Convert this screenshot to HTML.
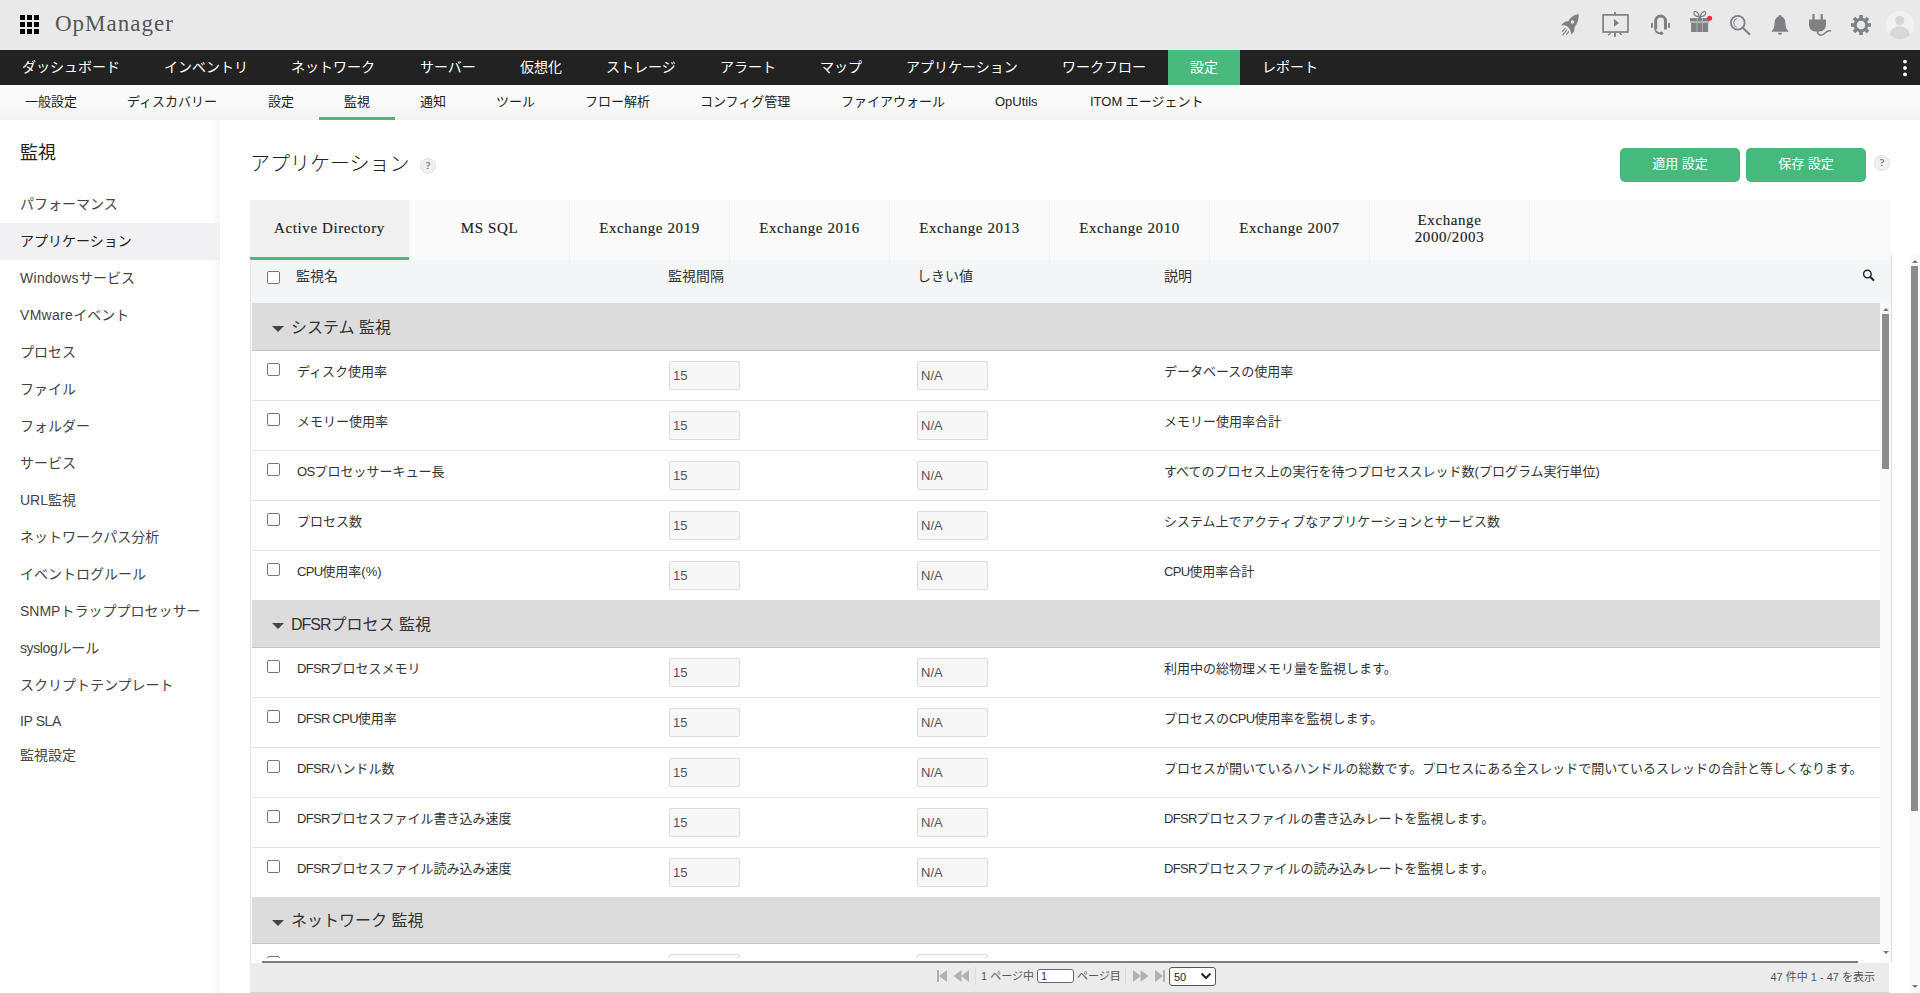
<!DOCTYPE html>
<html lang="ja">
<head>
<meta charset="utf-8">
<title>OpManager</title>
<style>
*{box-sizing:border-box;margin:0;padding:0}
html,body{width:1920px;height:993px;overflow:hidden;background:#fff}
body{position:relative;font-family:"Liberation Sans","Noto Sans CJK JP",sans-serif;font-size:13px;color:#333}
.abs{position:absolute}
#top{left:0;top:0;width:1920px;height:50px;background:#e9e9ea}
#logo{left:55px;top:9px;font-family:"Liberation Serif",serif;font-size:23px;line-height:30px;color:#555;white-space:nowrap;letter-spacing:1px}
#nav{left:0;top:50px;width:1920px;height:35px;background:#222}
#nav span{position:absolute;top:0;height:35px;line-height:35px;color:#fff;font-size:14px;white-space:nowrap}
#nav .on{background:#48ba7d}
#sub{left:0;top:85px;width:1920px;height:35px;background:linear-gradient(to bottom,#fafafa 0,#fafafa 50%,#f2f2f2 100%)}
#sub span{position:absolute;top:0;height:35px;line-height:33px;color:#222;font-size:13px;white-space:nowrap}
#side{left:0;top:120px;width:220px;height:873px;background:linear-gradient(to right,#fff 0,#fff 212px,#f5f5f5 220px)}
#side h3{position:absolute;left:20px;top:21px;font-size:18px;font-weight:normal;color:#222;line-height:24px}
#side a{position:absolute;left:0;width:220px;height:37px;line-height:36px;padding-left:20px;font-size:14px;color:#444;white-space:nowrap}
#side a.on{background:#f1f1f3;color:#222}
</style>
</head>
<body>
<div id="top" class="abs">
  <svg class="abs" style="left:20px;top:15px" width="19" height="19" viewBox="0 0 19 19"><g fill="#000"><rect x="0" y="0" width="5" height="5"/><rect x="7" y="0" width="5" height="5"/><rect x="14" y="0" width="5" height="5"/><rect x="0" y="7" width="5" height="5"/><rect x="7" y="7" width="5" height="5"/><rect x="14" y="7" width="5" height="5"/><rect x="0" y="14" width="5" height="5"/><rect x="7" y="14" width="5" height="5"/><rect x="14" y="14" width="5" height="5"/></g></svg>
  <div id="logo" class="abs">OpManager</div>
  <svg class="abs" style="left:1540px;top:0" width="380" height="50" viewBox="1540 0 380 50">
    <g fill="#7e8083" stroke="none">
      <!-- rocket -->
      <path d="M1578.7 14 C1574.5 14.6 1571.2 16.6 1569.2 19.8 L1568.3 21.2 C1565.6 21 1562.8 22.6 1561 25.6 C1563.4 24.8 1566 25.4 1568 27 C1569.8 28.6 1570.8 30.6 1571.2 34.2 C1573.6 33 1575 30.6 1574.4 27.6 C1577.4 23.6 1579 19 1578.7 14 Z"/>
      <circle cx="1572.4" cy="22" r="1.7" fill="#ededee"/>
      <path d="M1565.5 28 L1562 31.8 M1566.9 29.6 L1562.6 35.4 M1568.7 31.4 L1566.2 35" stroke="#7e8083" stroke-width="1.1" fill="none"/>
      <!-- presentation -->
      <rect x="1603.1" y="14.9" width="24.9" height="17.1" fill="none" stroke="#7e8083" stroke-width="1.7"/>
      <rect x="1614" y="12" width="1.9" height="3"/>
      <rect x="1614" y="32.6" width="1.9" height="4.3"/>
      <path d="M1610.6 32.8 L1608.2 35.4 M1619.4 32.8 L1621.6 35" stroke="#7e8083" stroke-width="1.3" fill="none"/>
      <path d="M1614 19 L1619 22.9 L1614 26.8 Z"/>
      <!-- headset -->
      <path d="M1655.7 29 L1655.7 21 A4.9 4.9 0 0 1 1665.5 21 L1665.5 29.4" fill="none" stroke="#7e8083" stroke-width="3"/>
      <path d="M1657.9 27.6 L1657.9 21.4 A2.7 3 0 0 1 1663.3 21.4 L1663.3 27.6 Z" fill="#e9e9ea" opacity=".55"/>
      <path d="M1655.2 28.6 C1655.4 32.2 1657.4 33.3 1661 33.3" fill="none" stroke="#7e8083" stroke-width="1.7"/>
      <circle cx="1661.4" cy="33.2" r="1.8"/>
      <rect x="1651" y="22.8" width="1.9" height="5.2" rx=".9"/><rect x="1668.1" y="22.8" width="1.9" height="5.2" rx=".9"/>
      <!-- gift -->
      <rect x="1690" y="18.1" width="19.4" height="3.5"/>
      <rect x="1691.1" y="23" width="17" height="9"/>
      <rect x="1690" y="21.6" width="19.4" height="1.4" fill="#b9babc"/>
      <rect x="1696.5" y="18.1" width="1.1" height="13.9" fill="#a9abad"/><rect x="1701.9" y="18.1" width="1.1" height="13.9" fill="#a9abad"/>
      <path d="M1699.3 16.6 C1696.4 16.8 1693.6 15 1693.9 12.8 C1694.3 10.4 1697.6 10.8 1699.3 16 M1700.3 16.6 C1703.2 16.8 1706 15 1705.7 12.8 C1705.3 10.4 1702 10.8 1700.3 16" fill="none" stroke="#7e8083" stroke-width="1.3"/>
      <rect x="1698.6" y="15.8" width="2.4" height="2.4"/>
      <circle cx="1709.6" cy="18.2" r="2.5" fill="#f7283a"/>
      <!-- search -->
      <circle cx="1737.8" cy="22.8" r="6.9" fill="none" stroke="#7e8083" stroke-width="1.8"/>
      <path d="M1737.4 18.4 A4.6 4.6 0 0 0 1736.6 27.2" fill="none" stroke="#7e8083" stroke-width="1"/>
      <path d="M1742.8 27.8 L1749.4 34.2" stroke="#7e8083" stroke-width="2.2" stroke-linecap="round" fill="none"/>
      <!-- bell -->
      <path d="M1780 15 C1781.2 15 1781.6 15.8 1781.6 16.4 C1784.4 17.4 1785.2 20 1785.4 23 C1785.6 27 1786.2 29 1788.2 30.8 L1788.2 31.8 L1771.8 31.8 L1771.8 30.8 C1773.8 29 1774.4 27 1774.6 23 C1774.8 20 1775.6 17.4 1778.4 16.4 C1778.4 15.8 1778.8 15 1780 15 Z"/>
      <path d="M1777.8 32.8 L1782.2 32.8 A2.2 2 0 0 1 1777.8 32.8 Z"/>
    </g>
    <g fill="#808080">
      <!-- plug -->
      <rect x="1812.4" y="14" width="2.2" height="6"/><rect x="1820.6" y="14" width="2.2" height="6"/>
      <path d="M1809 19.6 L1826 19.6 L1826 24.5 C1826 28.5 1823.4 31.2 1819.6 31.6 L1815.4 31.6 C1811.6 31.2 1809 28.5 1809 24.5 Z"/>
      <path d="M1817.4 31 C1817.4 35.6 1822 36.2 1824.4 33.6 C1826.4 31.4 1828.4 30.2 1831 31" fill="none" stroke="#808080" stroke-width="1.5"/>
    </g>
    <!-- gear -->
    <g transform="translate(1861 25)" fill="#7e8083">
      <circle r="5.8" fill="none" stroke="#7e8083" stroke-width="3"/>
      <g id="t"><rect x="-1.8" y="-10" width="3.6" height="3.6"/></g>
      <rect x="-1.8" y="-10" width="3.6" height="3.6" transform="rotate(45)"/>
      <rect x="-1.8" y="-10" width="3.6" height="3.6" transform="rotate(90)"/>
      <rect x="-1.8" y="-10" width="3.6" height="3.6" transform="rotate(135)"/>
      <rect x="-1.8" y="-10" width="3.6" height="3.6" transform="rotate(180)"/>
      <rect x="-1.8" y="-10" width="3.6" height="3.6" transform="rotate(225)"/>
      <rect x="-1.8" y="-10" width="3.6" height="3.6" transform="rotate(270)"/>
      <rect x="-1.8" y="-10" width="3.6" height="3.6" transform="rotate(315)"/>
    </g>
    <!-- avatar -->
    <clipPath id="av"><circle cx="1900" cy="25" r="14"/></clipPath>
    <circle cx="1900" cy="25" r="14" fill="#f1f1f1"/>
    <g clip-path="url(#av)" fill="#d7d7d7"><circle cx="1899.8" cy="20.6" r="4.7"/><ellipse cx="1899.8" cy="34.6" rx="10" ry="8.3"/></g>
  </svg>

</div>
<div id="nav" class="abs">
  <span style="left:22px">ダッシュボード</span>
  <span style="left:164px">インベントリ</span>
  <span style="left:291px">ネットワーク</span>
  <span style="left:420px">サーバー</span>
  <span style="left:520px">仮想化</span>
  <span style="left:606px">ストレージ</span>
  <span style="left:720px">アラート</span>
  <span style="left:820px">マップ</span>
  <span style="left:906px">アプリケーション</span>
  <span style="left:1062px">ワークフロー</span>
  <span class="on" style="left:1168px;width:72px;text-align:center">設定</span>
  <span style="left:1262px">レポート</span>
  <svg class="abs" style="left:1902px;top:9px" width="6" height="18" viewBox="0 0 6 18"><g fill="#fff"><circle cx="3" cy="2.6" r="1.9"/><circle cx="3" cy="9" r="1.9"/><circle cx="3" cy="15.4" r="1.9"/></g></svg>
</div>
<div id="sub" class="abs">
  <span style="left:25px">一般設定</span>
  <span style="left:127px">ディスカバリー</span>
  <span style="left:268px">設定</span>
  <span style="left:344px">監視</span>
  <span style="left:420px">通知</span>
  <span style="left:496px">ツール</span>
  <span style="left:585px">フロー解析</span>
  <span style="left:700px">コンフィグ管理</span>
  <span style="left:841px">ファイアウォール</span>
  <span style="left:995px">OpUtils</span>
  <span style="left:1090px">ITOM エージェント</span>
  <i class="abs" style="left:319px;top:32px;width:76px;height:3px;background:#48ba7d"></i>
</div>
<div id="side" class="abs">
  <h3>監視</h3>
  <a style="top:66px">パフォーマンス</a>
  <a class="on" style="top:103px">アプリケーション</a>
  <a style="top:140px"><span class="w">Windows</span>サービス</a>
  <a style="top:177px"><span class="w">VMware</span>イベント</a>
  <a style="top:214px">プロセス</a>
  <a style="top:251px">ファイル</a>
  <a style="top:288px">フォルダー</a>
  <a style="top:325px">サービス</a>
  <a style="top:362px">URL監視</a>
  <a style="top:399px">ネットワークパス分析</a>
  <a style="top:436px">イベントログルール</a>
  <a style="top:473px">SNMPトラッププロセッサー</a>
  <a style="top:510px"><span class="l2">syslog</span>ルール</a>
  <a style="top:547px">スクリプトテンプレート</a>
  <a style="top:583px"><span class="l2">IP SLA</span></a>
  <a style="top:617px">監視設定</a>
</div>

<style>
#main h2{position:absolute;left:250px;top:149px;font-size:20px;font-weight:300;color:#222;line-height:30px;white-space:nowrap}
.help{position:absolute;width:16px;height:16px;border-radius:50%;background:#f0f0f0;border:1px solid #e0e0e0;color:#444;font-size:10px;line-height:14px;text-align:center;font-weight:normal;font-family:"Liberation Serif",serif}
.btn{position:absolute;top:148px;width:119px;height:34px;background:#46b97c;border-radius:5px;color:#fff;font-size:13px;line-height:32px;text-align:center}
#tabs{left:250px;top:200px;width:1641px;height:60px;background:#fafafa}
#tabs div{position:absolute;top:0;width:160px;height:60px;border-right:1px solid #eee;font-family:"Liberation Serif",serif;font-size:15px;letter-spacing:.6px;-webkit-text-stroke:.15px #222;color:#222;text-align:center;display:flex;align-items:center;justify-content:center;line-height:17px;padding-bottom:3px}
#tabs div.on{background:#f0f0f0;border-bottom:3px solid #48ba7d;padding-bottom:0;border-right:none;width:159px}
#thead{left:250px;top:260px;width:1641px;height:43px;background:#f4f5f7}
#thead span{position:absolute;top:0;line-height:33px;font-size:14px;color:#333;white-space:nowrap}
.cb{position:absolute;width:13px;height:13px;border:1px solid #767676;border-radius:2px;background:#fff}
#tb{left:252px;top:303px;width:1628px;height:656px;overflow:hidden;background:#fff}
.g{position:absolute;left:0;width:1628px;height:48px;background:#dcdcdc;border-bottom:1px solid #c4c4c4;font-size:16px;color:#333;line-height:49px;padding-left:39px;white-space:nowrap;z-index:2}
.g:before{content:"";position:absolute;left:20px;top:23px;border:6px solid transparent;border-top:6px solid #444;border-bottom:none}
.r{position:absolute;left:0;width:1628px;height:50px;border-bottom:1px solid #e4e4e4;background:#fff}
.r .cb{left:15px;top:12px}
.r b{position:absolute;left:45px;top:10px;font-weight:normal;font-size:13px;line-height:22px;color:#333;white-space:nowrap}
.r u{position:absolute;left:912px;top:10px;text-decoration:none;font-size:13px;line-height:22px;color:#333;white-space:nowrap}
.r i{position:absolute;top:10px;width:71px;height:29px;border:1px solid #dcdcdc;border-radius:2px;background:#f7f7f7;font-style:normal;font-size:13px;color:#555;line-height:27px;padding-left:3px}
.r i.a{left:417px}.r i.b{left:665px}
.w{letter-spacing:.3px}.l2{letter-spacing:-.4px}.l{letter-spacing:-.7px}.g .l{letter-spacing:-1px}
#pager{left:250px;top:963px;width:1639px;height:30px;background:#ebebeb;border-bottom:1px solid #d4d4d4;font-size:11px;color:#555}
</style>
<div id="main">
  <h2>アプリケーション</h2>
  <span class="help" style="left:420px;top:158px">?</span>
  <div class="btn" style="left:1620px;width:120px">適用 設定</div>
  <div class="btn" style="left:1746px;width:120px">保存 設定</div>
  <span class="help" style="left:1874px;top:155px">?</span>
  <div id="tabs" class="abs">
    <div class="on" style="left:0">Active Directory</div>
    <div style="left:160px">MS SQL</div>
    <div style="left:320px">Exchange 2019</div>
    <div style="left:480px">Exchange 2016</div>
    <div style="left:640px">Exchange 2013</div>
    <div style="left:800px">Exchange 2010</div>
    <div style="left:960px">Exchange 2007</div>
    <div style="left:1120px">Exchange<br>2000/2003</div>
  </div>
  <div id="thead" class="abs">
    <em class="cb" style="left:17px;top:11px"></em>
    <span style="left:46px">監視名</span>
    <span style="left:418px">監視間隔</span>
    <span style="left:667px">しきい値</span>
    <span style="left:914px">説明</span>
    <svg class="abs" style="left:1612px;top:9px" width="13" height="13" viewBox="0 0 13 13"><circle cx="5.4" cy="5" r="3.8" fill="none" stroke="#222" stroke-width="1.4"/><path d="M8.4 8 L11.4 11" stroke="#222" stroke-width="1.9" stroke-linecap="round"/></svg>
  </div>
  <div id="tb" class="abs">
    <div class="g" style="top:0px">システム 監視</div>
    <div class="r" style="top:48px"><em class="cb"></em><b>ディスク使用率</b><i class="a">15</i><i class="b">N/A</i><u>データベースの使用率</u></div>
    <div class="r" style="top:98px"><em class="cb"></em><b>メモリー使用率</b><i class="a">15</i><i class="b">N/A</i><u>メモリー使用率合計</u></div>
    <div class="r" style="top:148px"><em class="cb"></em><b><span class="l">OS</span>プロセッサーキュー長</b><i class="a">15</i><i class="b">N/A</i><u>すべてのプロセス上の実行を待つプロセススレッド数(プログラム実行単位)</u></div>
    <div class="r" style="top:198px"><em class="cb"></em><b>プロセス数</b><i class="a">15</i><i class="b">N/A</i><u>システム上でアクティブなアプリケーションとサービス数</u></div>
    <div class="r" style="top:248px"><em class="cb"></em><b><span class="l">CPU</span>使用率(%)</b><i class="a">15</i><i class="b">N/A</i><u><span class="l">CPU</span>使用率合計</u></div>
    <div class="g" style="top:297px"><span class="l">DFSR</span>プロセス 監視</div>
    <div class="r" style="top:345px"><em class="cb"></em><b><span class="l">DFSR</span>プロセスメモリ</b><i class="a">15</i><i class="b">N/A</i><u>利用中の総物理メモリ量を監視します。</u></div>
    <div class="r" style="top:395px"><em class="cb"></em><b><span class="l">DFSR CPU</span>使用率</b><i class="a">15</i><i class="b">N/A</i><u>プロセスの<span class="l">CPU</span>使用率を監視します。</u></div>
    <div class="r" style="top:445px"><em class="cb"></em><b><span class="l">DFSR</span>ハンドル数</b><i class="a">15</i><i class="b">N/A</i><u>プロセスが開いているハンドルの総数です。プロセスにある全スレッドで開いているスレッドの合計と等しくなります。</u></div>
    <div class="r" style="top:495px"><em class="cb"></em><b><span class="l">DFSR</span>プロセスファイル書き込み速度</b><i class="a">15</i><i class="b">N/A</i><u><span class="l">DFSR</span>プロセスファイルの書き込みレートを監視します。</u></div>
    <div class="r" style="top:545px"><em class="cb"></em><b><span class="l">DFSR</span>プロセスファイル読み込み速度</b><i class="a">15</i><i class="b">N/A</i><u><span class="l">DFSR</span>プロセスファイルの読み込みレートを監視します。</u></div>
    <div class="g" style="top:594px;height:47px;line-height:48px">ネットワーク 監視</div>
    <div class="r" style="top:641px"><em class="cb"></em><b></b><i class="a">15</i><i class="b">N/A</i><u></u></div>
  </div>
  <i class="abs" style="left:250px;top:259px;width:1px;height:734px;background:#e3e3e3"></i>
  <i class="abs" style="left:1891px;top:255px;width:1px;height:708px;background:#dedede"></i>
  <!-- inner scrollbar -->
  <div class="abs" style="left:1880px;top:303px;width:10px;height:660px;width:11px;background:#fafafa"></div>
  <i class="abs" style="left:1882px;top:314px;width:7px;height:155px;background:#8c8c8c"></i>
  <i class="abs" style="left:1882.5px;top:308px;border:3px solid transparent;border-bottom:3px solid #777;border-top:none"></i>
  <i class="abs" style="left:1882.5px;top:951px;border:3px solid transparent;border-top:3px solid #777;border-bottom:none"></i>
  <!-- outer scrollbar -->
  <div class="abs" style="left:1909px;top:255px;width:11px;height:738px;background:#fafafa"></div>
  <i class="abs" style="left:1911px;top:266px;width:7px;height:545px;background:#8c8c8c"></i>
  <i class="abs" style="left:1911.5px;top:260px;border:3px solid transparent;border-bottom:3px solid #777;border-top:none"></i>
  <i class="abs" style="left:1911.5px;top:985px;border:3px solid transparent;border-top:3px solid #777;border-bottom:none"></i>
  <i class="abs" style="left:252px;top:958px;width:1628px;height:5px;background:#fff"></i><i class="abs" style="left:262px;top:961px;width:1596px;height:2px;background:#7d7d7d"></i>
  <div id="pager" class="abs">
    <svg class="abs" style="left:685px;top:6px" width="240" height="14" viewBox="935 969 240 14">
      <g fill="#b2b2b2"><rect x="937" y="970" width="2" height="12"/><path d="M947 970 L947 982 L939 976 Z"/>
      <path d="M961.4 970 L961.4 982 L953.6 976 Z M969 970 L969 982 L961.2 976 Z"/>
      <path d="M1133 970 L1133 982 L1140.8 976 Z M1140.6 970 L1140.6 982 L1148.4 976 Z"/>
      <path d="M1155 970 L1155 982 L1163 976 Z"/><rect x="1163" y="970" width="2" height="12"/></g>
    </svg>
    <i class="abs" style="left:725px;top:4px;width:1px;height:18px;background:#dcdcdc"></i>
    <i class="abs" style="left:875px;top:4px;width:1px;height:18px;background:#dcdcdc"></i>
    <span class="abs" style="left:731px;top:6px;line-height:14px;white-space:nowrap">1 ページ中</span>
    <span class="abs" style="left:787px;top:6px;width:37px;height:14px;border:1px solid #666;border-radius:3px;background:#fff;font-size:11px;line-height:13px;padding-left:3px;color:#333">1</span>
    <span class="abs" style="left:827px;top:6px;line-height:14px;white-space:nowrap">ページ目</span>
    <span class="abs" style="left:919px;top:4px;width:47px;height:19px;border:1px solid #555;border-radius:3px;background:#fff;font-size:11px;line-height:18px;padding-left:4px;color:#222">50</span>
    <svg class="abs" style="left:950px;top:9px" width="12" height="8" viewBox="0 0 12 8"><path d="M1.5 1.5 L6 6 L10.5 1.5" fill="none" stroke="#222" stroke-width="2"/></svg>
    <span class="abs" style="right:14px;top:7px;line-height:14px;white-space:nowrap">47 件中 1 - 47 を表示</span>
  </div>
</div>

</body>
</html>
